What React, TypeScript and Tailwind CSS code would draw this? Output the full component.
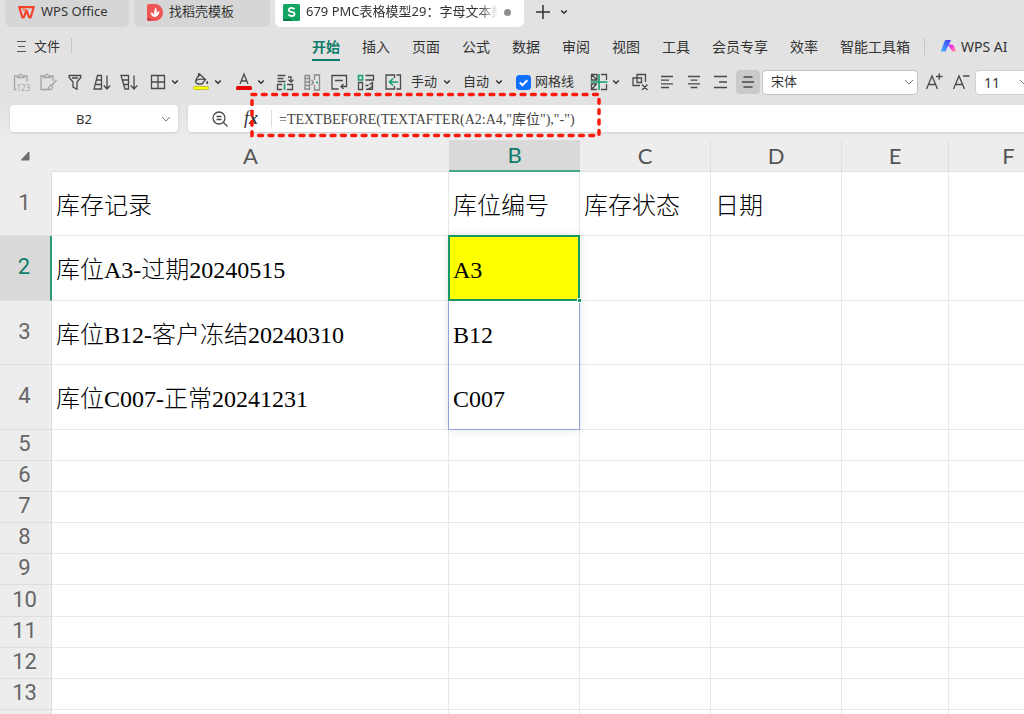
import React from "react";

const CJK = "font-['Noto_Sans','Noto_Sans_CJK_SC',sans-serif]";

type SvgProps = { children: React.ReactNode; tone?: string; w?: number };

function Icon({ children, tone = "text-[#4a4a4a]", w = 20 }: SvgProps) {
  return (
    <svg
      width={w}
      height="20"
      viewBox={`0 0 ${w} 20`}
      fill="none"
      stroke="currentColor"
      strokeWidth="1.3"
      className={`shrink-0 ${tone}`}
      aria-hidden="true"
    >
      {children}
    </svg>
  );
}

function Caret() {
  return (
    <svg width="8" height="8" viewBox="0 0 8 8" fill="none" stroke="#333" strokeWidth="1.5" className="shrink-0" aria-hidden="true">
      <path d="M1.200 2.500 4 5.300 6.800 2.500" />
    </svg>
  );
}

function Tool({ label, children }: { label: string; children: React.ReactNode }) {
  return (
    <button aria-label={label} className="flex h-6 w-[27px] shrink-0 items-center justify-center">
      {children}
    </button>
  );
}

function SplitTool({ label, children }: { label: string; children: React.ReactNode }) {
  return (
    <button aria-label={label} className="flex h-6 w-[43px] shrink-0 items-center gap-[3px] pl-[6px]">
      {children}
      <Caret />
    </button>
  );
}

function TextTool({ children }: { children: React.ReactNode }) {
  return (
    <button className="flex h-6 w-[52px] shrink-0 items-center gap-[6px] pl-[5px] text-[13px] text-[#333]">
      {children}
      <Caret />
    </button>
  );
}

function TabBar() {
  return (
    <div className="flex h-[27px] shrink-0 items-stretch gap-[5px] pl-[5px] text-[13px] text-[#333]">
      <button className="flex w-[124px] items-center gap-[6px] rounded-b-md bg-[#d6d6d6] pb-[3px] pl-[13px]">
        <svg width="17" height="13" viewBox="0 0 17 13" fill="none" aria-hidden="true">
          <path d="M6.6 1.1H1.2l3.2 10.4h1.3l2.8-7 2.8 7h1.3L15.8 1.1H6.6" stroke="#f5402c" strokeWidth="2.1" strokeLinejoin="round" />
          <path d="M4.8 3.2 8.4 4.6" stroke="#ff6a3c" strokeWidth="1.8" />
        </svg>
        WPS Office
      </button>
      <button className="flex w-[136px] items-center gap-[6px] rounded-b-md bg-[#d6d6d6] pb-[3px] pl-[13px]">
        <svg width="16" height="17" viewBox="0 0 16 17" aria-hidden="true">
          <path d="M0 1.5A1.5 1.5 0 0 1 1.5 0H8a8 8.5 0 0 1 0 17H2.5A2.5 2.5 0 0 1 0 14.5Z" fill="#f15656" />
          <path d="M0 14.2h4V17H2.5A2.5 2.5 0 0 1 0 14.5Z" fill="#c93b40" />
          <path d="M7.6 13C5 12.600 3.600 10.800 3.800 8.200c1.800.4 3 1.400 3.500 3C7 8 7.300 5.500 8.800 3.500c1 1.800 1.200 3.500.6 5.500.7-1 1.700-1.700 3-2C12.500 10.400 10.500 12.700 7.600 13Z" fill="#fff" />
        </svg>
        找稻壳模板
      </button>
      <div className="flex w-[249px] items-center rounded-b-md bg-white pb-[3px] pl-2">
        <svg width="17" height="17" viewBox="0 0 17 17" aria-hidden="true">
          <rect width="17" height="17" rx="1.5" fill="#10a562" />
          <path d="M0 15h8l1 2H1.500A1.500 1.500 0 0 1 0 15.500Z" fill="#087a45" />
          <path d="M11.400 5.300C10.800 4.300 9.800 3.900 8.500 3.900 6.900 3.900 5.700 4.600 5.700 5.900c0 2.700 5.800 1.300 5.800 4 0 1.300-1.300 2.100-3 2.100-1.500 0-2.600-.5-3.200-1.600" fill="none" stroke="#fff" strokeWidth="1.800" />
        </svg>
        <button className="ml-[6px] w-[192px] overflow-hidden whitespace-nowrap mask-r-from-90% text-left">
          679 PMC表格模型29：字母文本数
        </button>
        <span className="ml-[6px] size-[7px] rounded-full bg-[#8f8f8f]" />
      </div>
      <button aria-label="新建" className="ml-[6px] pb-[3px]">
        <svg width="16" height="16" viewBox="0 0 16 16" stroke="#333" strokeWidth="1.500" aria-hidden="true">
          <path d="M8 1v14M1 8h14" />
        </svg>
      </button>
      <button aria-label="标签列表" className="pb-[3px] pl-1">
        <Caret />
      </button>
    </div>
  );
}

const menus = ["插入", "页面", "公式", "数据", "审阅", "视图", "工具", "会员专享", "效率", "智能工具箱"];

function MenuBar() {
  return (
    <nav className="flex h-[38px] shrink-0 items-center whitespace-nowrap text-[14px] text-[#333]">
      <button className="flex w-[72px] items-center gap-[7px] border-r border-[#c6c6c6] pl-4 text-[13px] leading-4">
        <svg width="11" height="13" viewBox="0 0 11 13" stroke="#555" strokeWidth="1.200" aria-hidden="true">
          <path d="M1 1.500h9M2 6.500h7M1 11.500h9" />
        </svg>
        文件
      </button>
      <div className="ml-[240px] flex items-center gap-[22px]">
        <button className="h-[30px] border-b-2 border-[#0f7b6c] pt-[2px] font-bold text-[#0f7b6c]">开始</button>
        {menus.map((m) => (
          <button key={m}>{m}</button>
        ))}
      </div>
      <button className="ml-[14px] flex h-[17px] items-center gap-1 border-l border-[#c6c6c6] pl-[15px]">
        <svg width="17" height="14" viewBox="0 0 17 14" aria-hidden="true">
          <defs>
            <linearGradient id="aiBlue" x1="0" y1="1" x2="1" y2="0">
              <stop offset="0" stopColor="#45b4ff" />
              <stop offset="1" stopColor="#4338f5" />
            </linearGradient>
            <linearGradient id="aiPink" x1="0" y1="0" x2="1" y2="1">
              <stop offset="0" stopColor="#b32bff" />
              <stop offset=".5" stopColor="#ff3fd0" />
              <stop offset="1" stopColor="#ffab8c" />
            </linearGradient>
          </defs>
          <path d="M6 1h5L5.500 12.500H.8L4.600 2Q5 1 6 1Z" fill="url(#aiBlue)" />
          <path d="M7.800 5.500h3.700q1.500 0 2.200 1.200l2.600 5.800h-4Z" fill="url(#aiPink)" />
        </svg>
        WPS AI
      </button>
    </nav>
  );
}

function Align({ d, label }: { d: string; label: string }) {
  return (
    <Tool label={label}>
      <Icon>
        <path d={d} />
      </Icon>
    </Tool>
  );
}

function Toolbar() {
  return (
    <div className="flex h-[34px] shrink-0 items-center pl-[7px]">
      <Tool label="粘贴为数值">
        <Icon tone="text-[#a5a5a5]">
          <path d="M6 4H3.500v13.500h2M13.500 4h2.500v5.500M6.500 5.500V3.800h1.700Q9.800.6 11.400 3.800h1.700v1.700Z" />
          <text x="5.500" y="18.500" fontSize="8" fill="currentColor" stroke="none">123</text>
        </Icon>
      </Tool>
      <Tool label="选择性粘贴">
        <Icon tone="text-[#a5a5a5]">
          <path d="M5.500 4H3v13.500h6M12.500 4H15v5M5.500 5.500V3.800h1.700Q8.800.6 10.400 3.800h2.100v1.700Z" />
          <path d="m18.500 8-4.500 5M13 13c-2 .5-1.500 3-3.500 4.500 3 .5 5.500-.5 5-3.200Z" />
        </Icon>
      </Tool>
      <Tool label="筛选">
        <Icon>
          <path d="M4.200 3.500h11.600v2L12 10v7.200L8 15v-5L4.200 5.500ZM7 6h6" />
        </Icon>
      </Tool>
      <Tool label="升序">
        <Icon>
          <path d="M5.500 3.500h4V17H2ZM4.700 8h4.800M3.500 12.500h6M15 3.500V17M11.800 13.500 15 17l3.200-3.500" />
        </Icon>
      </Tool>
      <Tool label="降序">
        <Icon>
          <path d="M2 3.500h7.500V17h-3.500ZM3.200 8h6.300M4.500 12.500h5M15 3.500V17M11.800 13.500 15 17l3.200-3.500" />
        </Icon>
      </Tool>
      <SplitTool label="边框">
        <Icon>
          <path d="M3.500 3.500h13v13h-13ZM10 3.500v13M3.500 10h13" />
        </Icon>
      </SplitTool>
      <SplitTool label="填充颜色">
        <Icon>
          <path d="M5.500 6.500 9 2.500l5.500 5-3.500 4.500H6.500L4.500 9.500ZM5 8.500q5-2.500 9.500-.5M8 4.500Q6.500 2 8.500 1.500" />
          <path d="M16.200 8.500c1.300 2 1.500 3.500 0 3.500s-1.300-1.500 0-3.500Z" fill="#444" stroke="none" />
          <rect x="2.500" y="14.500" width="15" height="3" rx="1" fill="#ffff00" stroke="#b8b822" strokeWidth=".8" />
        </Icon>
      </SplitTool>
      <SplitTool label="字体颜色">
        <Icon>
          <path d="M6 12 10 2l4 10M7.300 9h5.400" />
          <rect x="2" y="14" width="16" height="4" rx="1.500" fill="#e60000" stroke="none" />
        </Icon>
      </SplitTool>
      <Tool label="行列转换">
        <Icon>
          <path d="M2.500 3.500h8M2.500 6.500h6M2.500 9.500h8M13 5h3v5M13.500 7.800l2.500 2.400L18.500 7.800M7 12.500H2.500v5H7M12 12.500h5.500v5H12" />
          <path d="M9.500 11.500v6.500" stroke="#159f74" strokeWidth="1.600" />
        </Icon>
      </Tool>
      <Tool label="分列">
        <Icon tone="text-[#8a8a8a]">
          <path d="M3 3v15M7.500 3v15M3 3.500h4.500M3 6.500h4.500M3 10h4.500M3 13.500h4.500M3 17h4.500M12.500 8V3h5v15h-5v-5M9.500 8l2 2.500-2 2.500" />
          <path d="M14 10.500h2" stroke="#159f74" />
        </Icon>
      </Tool>
      <Tool label="自动换行">
        <Icon>
          <path d="M9.500 17H3V3.500h14.500V14.500h-5M6 8.500h8M14.500 12l-2.500 2.500 2.500 2.500" />
        </Icon>
      </Tool>
      <Tool label="转置">
        <Icon>
          <path d="M9.500 3.500h8v4.500h-8M2.500 10.500h4v7h-4ZM16.500 12c0 3.500-2 5-6.500 5.300M9.500 13.500h3M13.500 12.500l3-2v6.800H10" />
          <path d="M2.500 3.500h4v4.500h-4Z" stroke="#159f74" strokeWidth="1.600" />
        </Icon>
      </Tool>
      <Tool label="插入列">
        <Icon>
          <path d="M11.500 6V3H3v14h8.500v-3M13.500 3h4v14h-4" />
          <path d="M15 10H6.500M10 6.500 6.500 10l3.500 3.500" stroke="#159f74" strokeWidth="1.600" />
        </Icon>
      </Tool>
      <TextTool>手动</TextTool>
      <TextTool>自动</TextTool>
      <label className="flex w-[73px] shrink-0 items-center gap-1 whitespace-nowrap pl-[6px] text-[13px] text-[#333]">
        <span className="grid size-[15px] shrink-0">
          <input
            type="checkbox"
            defaultChecked
            className="peer col-start-1 row-start-1 size-[15px] appearance-none rounded-[3px] border border-[#999] bg-white checked:border-[#0f6fff] checked:bg-[#0f6fff]"
          />
          <svg viewBox="0 0 15 15" className="pointer-events-none invisible col-start-1 row-start-1 peer-checked:visible" fill="none" stroke="#fff" strokeWidth="2" aria-hidden="true">
            <path d="m3.800 7.500 2.700 2.700 4.800-4.900" />
          </svg>
        </span>
        网格线
      </label>
      <SplitTool label="冻结窗格">
        <Icon>
          <path d="M8 2.500H2.500V8H8ZM12 2.500h5.500V8M12 17.500h5.500V12M8 12H2.500v5.500H8M3 3l5 5M3 17l4.500-5" />
          <path d="M1.500 10h17M10 2v16" stroke="#159f74" strokeWidth="1.600" />
        </Icon>
      </SplitTool>
      <Tool label="取消组合">
        <Icon>
          <path d="M7 7V2.500h8.500v7.500M10 13.500H3V6h8.500v4.500H7V7M12 12.500l5.500 5.500M17.500 12.500 12 18" />
        </Icon>
      </Tool>
      <Align label="左对齐" d="M4 4.500h12M4 8.200h8M4 11.800h12M4 15.500h8" />
      <Align label="居中" d="M4 4.500h12M6.500 8.200h7M4 11.800h12M6.500 15.500h7" />
      <Align label="右对齐" d="M3 4.500h13M8 10h8M3 15.500h13" />
      <button aria-label="垂直居中" aria-pressed="true" className="mx-[2px] flex size-6 shrink-0 items-center justify-center rounded bg-[#cacaca]">
        <Icon>
          <path d="M5.500 5h9M4 10h12M5.500 15h9" />
        </Icon>
      </button>
      <div className="grid w-[156px] shrink-0 items-center">
        <select
          aria-label="字体"
          className="col-start-1 row-start-1 h-[25px] appearance-none rounded border border-[#c2c2c2] bg-white pl-2 text-[13px] text-[#333]"
        >
          <option>宋体</option>
        </select>
        <svg width="10" height="8" viewBox="0 0 10 8" fill="none" stroke="#777" className="pointer-events-none col-start-1 row-start-1 mr-1 justify-self-end" aria-hidden="true">
          <path d="m1 2 4 4 4-4" />
        </svg>
      </div>
      <div className="flex pl-[2px]">
        <Tool label="增大字号">
          <Icon>
            <path d="M2.500 17 8 4l5.500 13M4.500 12.500h7M12 4.500h6.500M15.200 1.200v6.600" />
          </Icon>
        </Tool>
        <Tool label="减小字号">
          <Icon>
            <path d="M2.500 17 8 4l5.500 13M4.500 12.500h7M12 4h6.500" />
          </Icon>
        </Tool>
      </div>
      <div className="ml-px grid w-16 shrink-0 items-center">
        <select aria-label="字号" className="col-start-1 row-start-1 h-[25px] appearance-none rounded border border-[#d0d0d0] bg-white pl-2 text-[14px] text-[#333]">
          <option>11</option>
        </select>
        <svg width="10" height="8" viewBox="0 0 10 8" fill="none" stroke="#777" className="pointer-events-none col-start-1 row-start-1 mr-[10px] justify-self-end" aria-hidden="true">
          <path d="m1 2 4 4 4-4" />
        </svg>
      </div>
    </div>
  );
}

function FormulaRow() {
  return (
    <div className="relative flex h-[41px] shrink-0 items-start gap-[10px] pl-[10px] pt-[6px]">
      <div className="grid w-[168px] shrink-0 items-center">
        <input
          aria-label="名称框"
          defaultValue="B2"
          className="col-start-1 row-start-1 h-[27px] w-full rounded bg-white pr-5 text-center text-[13px] text-[#333] shadow-sm outline-none"
        />
        <svg width="10" height="8" viewBox="0 0 10 8" fill="none" stroke="#777" className="pointer-events-none col-start-1 row-start-1 mr-[7px] justify-self-end" aria-hidden="true">
          <path d="m1 2 4 4 4-4" />
        </svg>
      </div>
      <div className="flex h-[27px] flex-1 items-center rounded-l bg-white shadow-sm">
        <button aria-label="浏览公式结果" className="ml-[22px]">
          <Icon>
            <circle cx="9" cy="9" r="6" />
            <path d="m13.500 13.500 4 4M6.500 7.500h5M6.500 10.500h5" />
          </Icon>
        </button>
        <button aria-label="插入函数" className="ml-[14px] w-[28px] border-r border-[#dcdcdc] text-left font-['Liberation_Serif',serif] text-[18px] leading-[17px] italic text-[#333]">
          f<b>x</b>
        </button>
        <input
          aria-label="编辑栏"
          defaultValue={'=TEXTBEFORE(TEXTAFTER(A2:A4,"库位"),"-")'}
          className="h-[25px] min-w-0 flex-1 self-start bg-transparent pl-[7px] font-['Liberation_Serif','Noto_Sans_CJK_SC',serif] text-[14px] text-[#444] outline-none"
        />
      </div>
      <svg width="352" height="46" viewBox="0 0 352 46" className="pointer-events-none absolute -top-[7px] left-[250px]" fill="none" aria-hidden="true">
        <rect x="2" y="2.500" width="347" height="41" stroke="#fb1a0c" strokeWidth="3.500" strokeLinecap="round" strokeDasharray="3.800 6.550" />
      </svg>
    </div>
  );
}

const columns = ["A", "B", "C", "D", "E", "F"];
const data: Record<number, string[]> = {
  1: ["库存记录", "库位编号", "库存状态", "日期"],
  2: ["库位A3-过期20240515", "A3"],
  3: ["库位B12-客户冻结20240310", "B12"],
  4: ["库位C007-正常20241231", "C007"],
};
const heights: Record<number, string> = { 1: "h-16", 2: "h-[65px]", 3: "h-16", 4: "h-[65px]", 10: "h-8" };
const lastNumbered = 13;

function Sheet() {
  return (
    <div className="min-h-0 flex-1 overflow-hidden bg-white">
      <table className="w-[1069px] table-fixed border-separate border-spacing-0">
        <colgroup>
          <col className="w-[52px]" />
          <col className="w-[397px]" />
          <col className="w-[131px]" />
          <col className="w-[131px]" />
          <col className="w-[131px]" />
          <col className="w-[107px]" />
          <col className="w-[120px]" />
        </colgroup>
        <thead>
          <tr className="h-8 bg-[#ededed] font-[family-name:Lato] text-[22px] leading-6 text-[#555]">
            <th aria-label="全选" className="border-b border-[#ededed] p-0">
              <svg width="10" height="10" viewBox="0 0 10 10" className="ml-5" aria-hidden="true">
                <path d="M9.500 1v7.500q0 1-1 1H1.500q-1-.2-.3-1L8 1.200q1.200-1 1.500 0Z" fill="#6e6e6e" />
              </svg>
            </th>
            {columns.map((c) => (
              <th
                key={c}
                className={
                  c === "B"
                    ? "border-b-2 border-[#4aa88c] bg-[#d9d9d9] p-0 font-normal text-[#0f7b6c]"
                    : c === "A"
                      ? "border-b border-[#dedede] p-0 font-normal"
                      : "border-r border-b border-[#dedede] p-0 font-normal"
                }
              >
                {c}
              </th>
            ))}
          </tr>
        </thead>
        <tbody>
          {Array.from({ length: lastNumbered + 1 }, (_, i) => i + 1).map((r) => (
            <tr key={r} className={heights[r] ?? "h-[31px]"}>
              <th
                className={
                  r === 2
                    ? "border-r-2 border-b border-r-[#2a9d78] border-b-[#dedede] bg-[#d9d9d9] p-0 font-['Roboto',sans-serif] text-[22px] leading-6 font-normal text-[#0f7b6c]"
                    : "border-r border-b border-[#dedede] bg-[#ededed] p-0 font-['Roboto',sans-serif] text-[22px] leading-6 font-normal text-[#666]"
                }
              >
                <div className="pr-[2px] pb-[2px]">{r <= lastNumbered ? r : null}</div>
              </th>
              {columns.map((c, i) => {
                const active = r === 2 && c === "B";
                return (
                  <td
                    key={c}
                    className={`border-r border-b border-[#e8e8e8] p-0 pt-1 pl-1 font-['Liberation_Serif','Noto_Sans_CJK_SC',serif] text-[24px] leading-6 font-light whitespace-nowrap text-black ${
                      active ? "relative z-10 bg-[#ffff00]" : ""
                    }`}
                  >
                    {data[r]?.[i]}
                    {active && (
                      <>
                        <span className="pointer-events-none absolute -top-px -right-px -left-px h-[195px] border border-[#8fa5d8] shadow-[0_0_8px_rgba(0,0,0,0.12)]" />
                        <span className="pointer-events-none absolute -top-px -right-px -bottom-px -left-px border-2 border-[#159a63]" />
                        <span className="pointer-events-none absolute -right-[3px] -bottom-[3px] size-[5px] border border-white bg-[#159a63]" />
                      </>
                    )}
                  </td>
                );
              })}
            </tr>
          ))}
        </tbody>
      </table>
    </div>
  );
}

export default function App() {
  return (
    <div className={`flex h-screen flex-col overflow-hidden bg-[#ededed] ${CJK}`}>
      <header className="flex shrink-0 flex-col bg-linear-to-b from-[#e2e2e2] from-70% to-[#ededed]">
        <TabBar />
        <MenuBar />
        <Toolbar />
        <FormulaRow />
      </header>
      <Sheet />
    </div>
  );
}
